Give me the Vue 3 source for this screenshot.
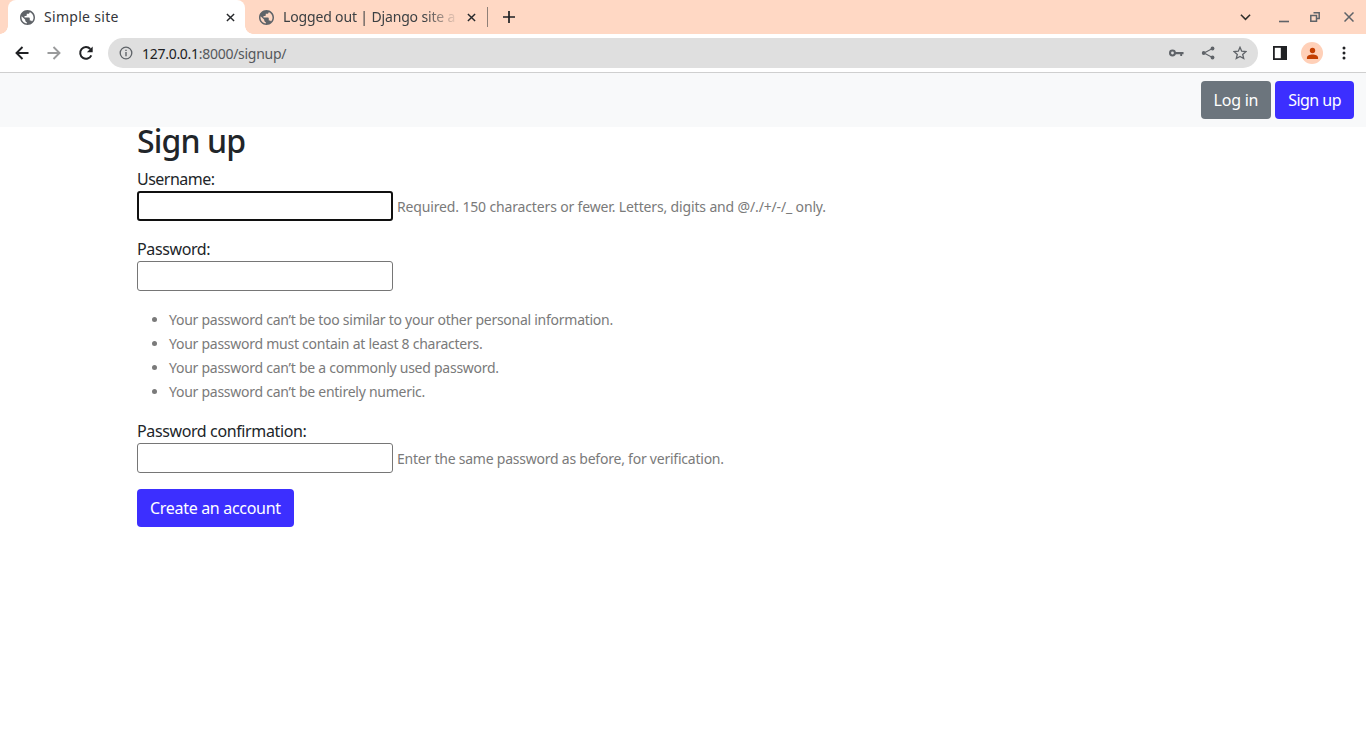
<script setup>
const hints = [
  'Your password can’t be too similar to your other personal information.',
  'Your password must contain at least 8 characters.',
  'Your password can’t be a commonly used password.',
  'Your password can’t be entirely numeric.'
]
const globe = 'M12 2C6.480 2 2 6.480 2 12s4.480 10 10 10 10-4.480 10-10S17.520 2 12 2zm-1 17.930c-3.950-.49-7-3.850-7-7.930 0-.62.08-1.210.21-1.790L9 15v1c0 1.100.9 2 2 2v1.930zm6.900-2.540c-.26-.81-1-1.390-1.900-1.390h-1v-3c0-.55-.45-1-1-1H8v-2h2c.55 0 1-.45 1-1V7h2c1.100 0 2-.9 2-2v-.41c2.930 1.190 5 4.060 5 7.410 0 2.080-.8 3.970-2.100 5.390z'
</script>

<template>
  <div class="page">
    <header class="chrome">
      <div class="tabstrip">
        <div class="tab active">
          <svg class="globe" viewBox="2 2 20 20"><path :d="globe" fill="#5f6368"/></svg>
          <span class="tabtitle">Simple site</span>
          <svg class="x" viewBox="0 0 10 10"><path d="M1 1l8 8M9 1l-8 8" stroke="#26282b" stroke-width="1.600"/></svg>
        </div>
        <div class="tab inactive">
          <svg class="globe" viewBox="2 2 20 20"><path :d="globe" fill="#5f6368"/></svg>
          <span class="tabtitle fade">Logged out | Django site a</span>
          <svg class="x" viewBox="0 0 10 10"><path d="M1 1l8 8M9 1l-8 8" stroke="#26282b" stroke-width="1.600"/></svg>
        </div>
        <span class="divider"></span>
        <svg class="plus" viewBox="0 0 12 12"><path d="M6 0v12M0 6h12" stroke="#1f2124" stroke-width="1.700"/></svg>
        <div class="winctl">
          <svg class="chev" viewBox="0 0 12 8"><path d="M1 1.500l5 5 5-5" fill="none" stroke="#30302c" stroke-width="1.700"/></svg>
          <svg class="min" viewBox="0 0 10 10"><path d="M0 8.500h10" stroke="#5f6368" stroke-width="1.600"/></svg>
          <svg class="max" viewBox="0 0 10 10"><path d="M3.500 .8h5.700v5.700H6.500M.8 3.500h5.700v5.700H.8z" fill="none" stroke="#5f6368" stroke-width="1.500"/></svg>
          <svg class="cls" viewBox="0 0 10 10"><path d="M.5 .5l9 9M9.500 .5l-9 9" stroke="#5f6368" stroke-width="1.500"/></svg>
        </div>
      </div>
      <div class="toolbar">
        <svg class="nav" viewBox="0 0 16 16"><path d="M14.500 8H2.500M8.500 2L2.500 8l6 6" fill="none" stroke="#202124" stroke-width="1.900"/></svg>
        <svg class="nav" viewBox="0 0 16 16"><path d="M1.500 8h12M7.500 2l6 6-6 6" fill="none" stroke="#9a9b9c" stroke-width="1.900"/></svg>
        <svg class="nav" viewBox="0 0 16 16"><path d="M13.300 10.300A5.800 5.800 0 1 1 12.300 4" fill="none" stroke="#202124" stroke-width="2"/><path d="M14.700 1.500v5.800H8.900z" fill="#202124"/></svg>
        <div class="omnibox">
          <svg class="info" viewBox="0 0 14 14"><circle cx="7" cy="7" r="5.800" fill="none" stroke="#5f6368" stroke-width="1.300"/><path d="M7 6v4.200M7 3.700v1.400" stroke="#5f6368" stroke-width="1.400"/></svg>
          <span class="url"><b>127.0.0.1</b>:8000/signup/</span>
          <span class="spacer"></span>
          <svg class="omni-key" viewBox="0 0 16 10"><circle cx="3.700" cy="5" r="2.600" fill="none" stroke="#5f6368" stroke-width="2.200"/><path d="M6 3.800h9.500v2.400h-1.500V8.200h-2V6.200H6z" fill="#5f6368"/></svg>
          <svg class="omni-share" viewBox="0 0 14 14"><path d="M11.500 2.500L3 7l8.500 4.500" fill="none" stroke="#5f6368" stroke-width="1.100"/><circle cx="11.500" cy="2.500" r="1.900" fill="#5f6368"/><circle cx="2.700" cy="7" r="1.900" fill="#5f6368"/><circle cx="11.500" cy="11.500" r="1.900" fill="#5f6368"/></svg>
          <svg class="omni-star" viewBox="0 0 14 14"><path d="M7 1.300l1.700 3.900 4.200.4-3.200 2.800 1 4.100L7 10.400l-3.700 2.100 1-4.100L1.100 5.600l4.200-.4z" fill="none" stroke="#5f6368" stroke-width="1.300"/></svg>
        </div>
        <svg class="panel" viewBox="0 0 14 14"><rect x="0" y="0" width="14" height="14" fill="#202124"/><rect x="1.800" y="1.800" width="6" height="10.400" fill="#fff"/></svg>
        <span class="avatar"><svg viewBox="0 0 14 14"><circle cx="7" cy="3.800" r="2.900" fill="#c43e00"/><path d="M1 13v-1.500C1 9 4 8 7 8s6 1 6 3.500V13z" fill="#c43e00"/></svg></span>
        <svg class="menu" viewBox="0 0 4 14"><circle cx="2" cy="2" r="1.500" fill="#202124"/><circle cx="2" cy="7" r="1.500" fill="#202124"/><circle cx="2" cy="12" r="1.500" fill="#202124"/></svg>
      </div>
    </header>

    <nav class="navbar">
      <button class="btn grey">Log in</button>
      <button class="btn blue signup">Sign up</button>
    </nav>

    <main class="content">
      <h2>Sign up</h2>
      <form @submit.prevent>
        <p class="row">
          <label class="l-user" for="u">Username:</label><br>
          <input id="u" class="first" type="text">
          <span class="help">Required. 150 characters or fewer. Letters, digits and @/./+/-/_ only.</span>
        </p>
        <p class="row">
          <label for="p">Password:</label><br>
          <input id="p" type="password">
        </p>
        <ul class="help-list">
          <li v-for="h in hints" :key="h">{{ h }}</li>
        </ul>
        <p class="row">
          <label for="c">Password confirmation:</label><br>
          <input id="c" type="password">
          <span class="help h-enter">Enter the same password as before, for verification.</span>
        </p>
        <button class="btn blue create" type="submit">Create an account</button>
      </form>
    </main>
  </div>
</template>

<style>
html, body { margin: 0; background: #fff; }
</style>

<style scoped>
.page { font-family: "Noto Sans", "Open Sans", sans-serif; color: #212529; min-height: 741px; }
.chrome { border-bottom: 1px solid #cfcfcf; }
.tabstrip { height: 34px; background: #ffd8c4; display: flex; align-items: center; padding-left: 8px; font-size: 14px; }
.tab { height: 34px; box-sizing: border-box; display: flex; align-items: center; color: #3c4043; }
.tab.active { width: 237px; background: #fff; border-radius: 8px 8px 0 0; padding: 0 0 0 12px; color: #35363a; position: relative; }
.tab.active::before, .tab.active::after { content: ""; position: absolute; bottom: 0; width: 8px; height: 8px; }
.tab.active::before { left: -8px; background: radial-gradient(circle at 0 0, #ffd8c4 7.5px, #fff 8px); }
.tab.active::after { right: -8px; background: radial-gradient(circle at 100% 0, #ffd8c4 7.5px, #fff 8px); }
.tab.inactive { width: 242px; padding-left: 14px; }
.globe { width: 15px; height: 15px; flex: none; margin-right: 1px; }
.tabtitle { margin-left: 8px; margin-bottom: 2px; white-space: nowrap; }
.active .tabtitle { width: 174px; letter-spacing: .3px; }
.inactive .tabtitle { width: 176px; letter-spacing: -.15px; }
.fade { -webkit-mask-image: linear-gradient(to right, #000 80%, transparent 100%); mask-image: linear-gradient(to right, #000 80%, transparent 100%); }
.x { width: 9px; height: 9px; margin-left: 8px; flex: none; }
.divider { width: 1px; height: 20px; background: #8f8078; }
.plus { width: 12px; height: 12px; margin-left: 15px; }
.winctl { margin-left: auto; display: flex; align-items: center; padding-right: 12px; }
.chev { width: 11px; height: 8px; margin-right: 28px; }
.min { width: 10px; height: 10px; margin-top: 2px; margin-right: 21px; }
.max { width: 10px; height: 10px; margin-right: 24px; }
.cls { width: 10px; height: 10px; }
.toolbar { height: 38px; background: #fff; display: flex; align-items: center; padding-left: 14px; box-sizing: border-box; }
.nav { width: 16px; height: 16px; margin-right: 16px; }
.omnibox { width: 1150px; height: 30px; margin-left: -2px; background: #dfdfdf; border-radius: 15px; display: flex; align-items: center; padding-left: 11px; box-sizing: border-box; }
.info { width: 14px; height: 14px; }
.url { font-size: 14px; color: #55585c; margin-left: 9px; letter-spacing: -.28px; }
.url b { font-weight: 400; color: #202124; }
.spacer { flex: 1; }
.omni-key { width: 15px; height: 10px; margin-right: 17px; }
.omni-share { width: 14px; height: 14px; margin-right: 18px; }
.omni-star { width: 14px; height: 14px; margin-right: 11px; }
.panel { width: 14px; height: 14px; margin-left: 15px; }
.avatar { width: 22px; height: 22px; border-radius: 50%; background: #ffd0b8; margin-left: 14px; display: flex; align-items: center; justify-content: center; }
.avatar svg { width: 13px; height: 13px; }
.menu { width: 4px; height: 14px; margin-left: 19px; }
.navbar { height: 54px; background: #f8f9fa; display: flex; justify-content: flex-end; align-items: center; gap: 4px; padding-right: 12px; }
.btn { height: 38px; border: 1px solid transparent; border-radius: 4px; padding: 0 12px; color: #fff; font-family: inherit; font-size: 16px; line-height: 24px; letter-spacing: -.25px; }
.grey { background: #6c757d; }
.blue { background: #3c2fff; }
.btn.signup { letter-spacing: -.53px; }
.btn.create { letter-spacing: -.31px; }
.content { padding: 0 137px; }
h2 { margin: 0; font-size: 32px; font-weight: 500; line-height: 27px; height: 40px; letter-spacing: -.9px; }
.row { margin: 0 0 16px; font-size: 16px; line-height: 24px; height: 54px; color: #212529; letter-spacing: -.38px; }
label { color: #212529; }
label.l-user { letter-spacing: -.52px; }
input { box-sizing: border-box; width: 256px; height: 30px; margin: 0; padding: 1px 2px; background: #fff; border: 1px solid #767676; border-radius: 3px; vertical-align: top; outline: none; }
input.first { border: 2px solid #101010; }
.help { font-size: 14px; color: #7a7a7a; margin-left: 4px; line-height: 32px; letter-spacing: -.15px; }
.h-enter { letter-spacing: -.23px; }
.help-list { margin: 0 0 15px; padding: 1px 0 0 32px; font-size: 14px; line-height: 24px; color: #7a7a7a; letter-spacing: -.26px; }
</style>
